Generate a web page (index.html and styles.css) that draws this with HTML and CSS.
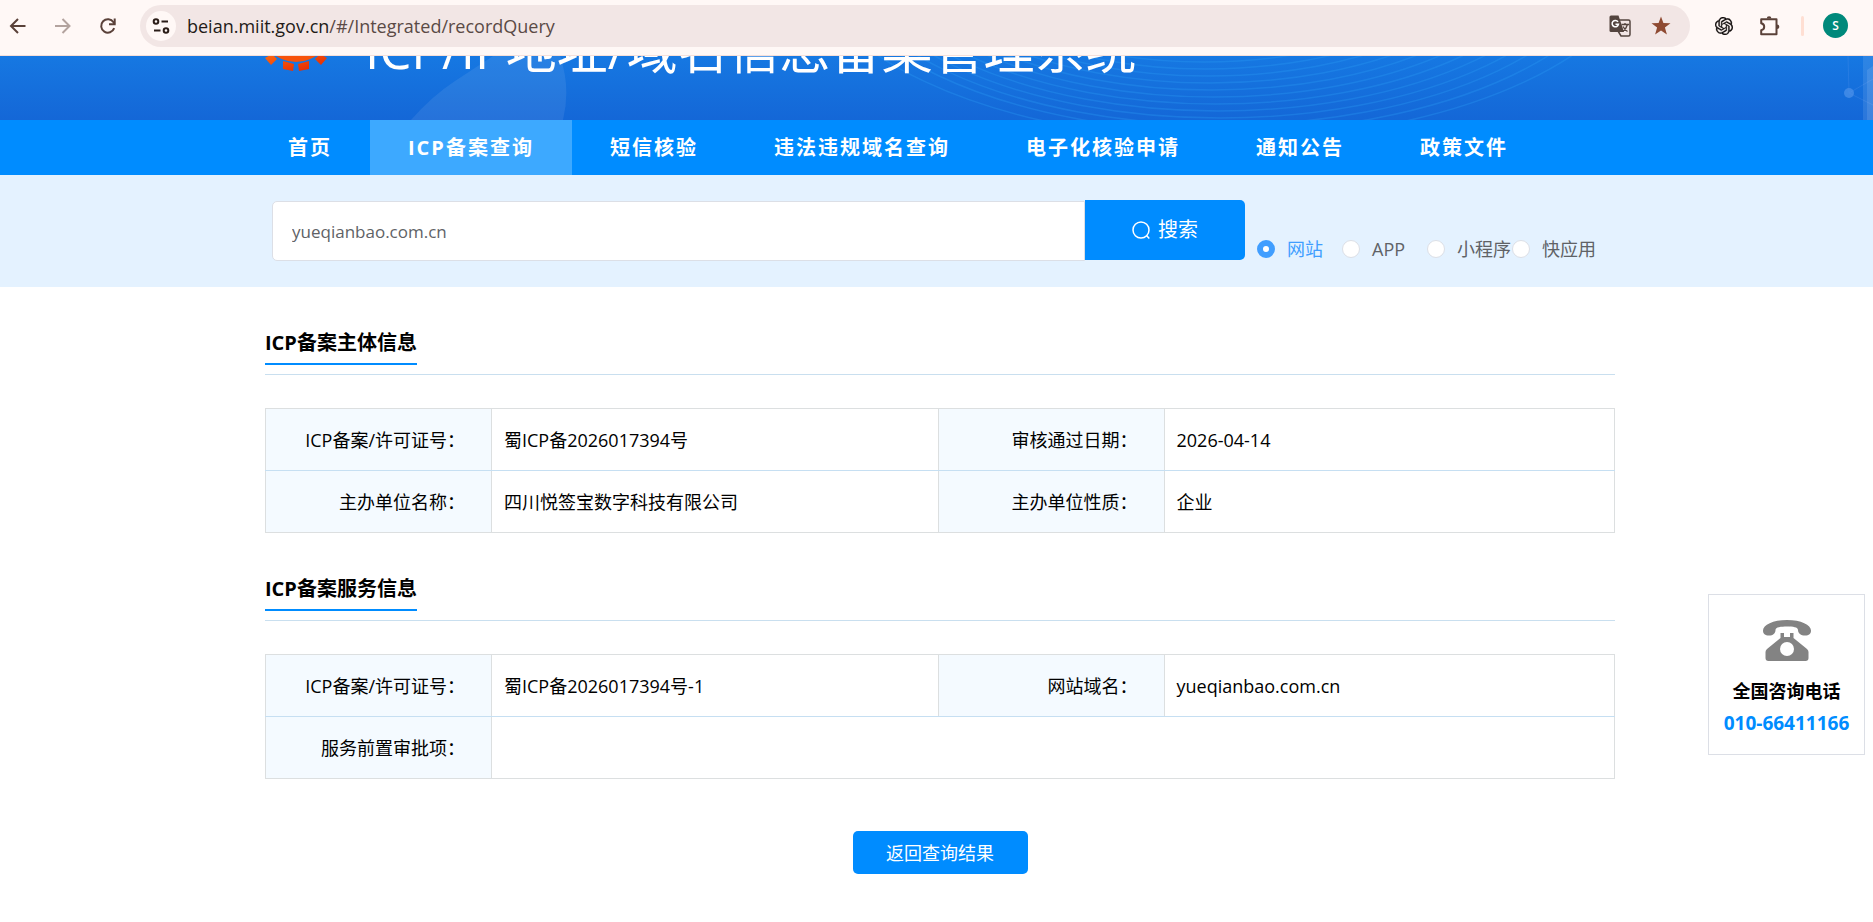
FILE: index.html
```html
<!DOCTYPE html>
<html lang="zh-CN">
<head>
<meta charset="utf-8">
<title>ICP/IP地址/域名信息备案管理系统</title>
<link rel="stylesheet" href="styles.css">
</head>
<body>
<div class="toolbar">
  <div class="nav-buttons">
    <button class="icon-btn" aria-label="后退"><svg width="20" height="20" viewBox="0 0 20 20"><path d="M17.500 10H3M10 3L3 10l7 7" fill="none" stroke="#5a4139" stroke-width="2"/></svg></button>
    <button class="icon-btn" aria-label="前进"><svg width="20" height="20" viewBox="0 0 20 20"><path d="M2 10h14.500M9.500 3l7 7-7 7" fill="none" stroke="#b3a39e" stroke-width="2"/></svg></button>
    <button class="icon-btn" aria-label="刷新"><svg width="20" height="20" viewBox="0 0 20 20"><path d="M16.200 12.200A6.700 6.700 0 1 1 15.500 6.300L16.600 7.800" fill="none" stroke="#5a4139" stroke-width="2"/><path d="M16.700 2.500v5.700H11" fill="none" stroke="#5a4139" stroke-width="2"/></svg></button>
  </div>
  <div class="omnibox">
    <button class="site-info" aria-label="网站信息"><svg width="18" height="18" viewBox="0 0 18 18" fill="none" stroke="#2b1d18" stroke-width="2"><circle cx="4" cy="4.500" r="2.300"/><path d="M9.500 4.500H16M2 13.500h6.500"/><circle cx="14" cy="13.500" r="2.300"/></svg></button>
    <div class="url"><span class="host">beian.miit.gov.cn</span><span>/#/Integrated/recordQuery</span></div>
    <button class="icon-btn" aria-label="翻译"><svg width="22" height="22" viewBox="0 0 22 22"><path d="M9 5h10.500q1.500 0 1.500 1.500v13q0 1.500-1.500 1.500H12l-3-5" fill="none" stroke="#54453f" stroke-width="1.500"/><path d="M2 .5h7.500L15 17H2Q.5 17 .5 15.500V2Q.5.5 2 .5z" fill="#54453f"/><path d="M9 6.800A3.200 3.200 0 1 0 9.500 9.200H6.500" fill="none" stroke="#fff" stroke-width="1.500"/><path d="M12.500 9.500H20M16 8v1.500M18.500 9.500q-1 4-5 7M14 11.500q1.500 3 4.500 5" fill="none" stroke="#54453f" stroke-width="1.300"/></svg></button>
    <button class="icon-btn" aria-label="书签"><svg width="22" height="22" viewBox="0 0 22 22"><path d="M11 1.500l2.400 6.600 7.100.2-5.600 4.300 2 6.900-5.900-4-5.900 4 2-6.900L1.500 8.300l7.100-.2z" fill="#8f4a32"/></svg></button>
  </div>
  <div class="extensions">
    <button class="icon-btn" aria-label="ChatGPT"><svg width="18" height="18" viewBox="0 0 24 24"><path fill="#120d0c" stroke="#120d0c" stroke-width=".4" d="M22.2819 9.8211a5.9847 5.9847 0 0 0-.5157-4.9108 6.0462 6.0462 0 0 0-6.5098-2.9A6.0651 6.0651 0 0 0 4.9807 4.1818a5.9847 5.9847 0 0 0-3.9977 2.9 6.0462 6.0462 0 0 0 .7427 7.0966 5.98 5.98 0 0 0 .511 4.9107 6.051 6.051 0 0 0 6.5146 2.9001A5.9847 5.9847 0 0 0 13.2599 24a6.0557 6.0557 0 0 0 5.7718-4.2058 5.9894 5.9894 0 0 0 3.9977-2.9001 6.0557 6.0557 0 0 0-.7475-7.0729zm-9.022 12.6081a4.4755 4.4755 0 0 1-2.8764-1.0408l.1419-.0804 4.7783-2.7582a.7948.7948 0 0 0 .3927-.6813v-6.7369l2.02 1.1686a.071.071 0 0 1 .038.052v5.5826a4.504 4.504 0 0 1-4.4945 4.4944zm-9.6607-4.1254a4.4708 4.4708 0 0 1-.5346-3.0137l.142.0852 4.783 2.7582a.7712.7712 0 0 0 .7806 0l5.8428-3.3685v2.3324a.0804.0804 0 0 1-.0332.0615L9.74 19.9502a4.4992 4.4992 0 0 1-6.1408-1.6464zM2.3408 7.8956a4.485 4.485 0 0 1 2.3655-1.9728V11.6a.7664.7664 0 0 0 .3879.6765l5.8144 3.3543-2.0201 1.1685a.0757.0757 0 0 1-.071 0l-4.8303-2.7865A4.504 4.504 0 0 1 2.3408 7.872zm16.5963 3.8558L13.1038 8.364 15.1192 7.2a.0757.0757 0 0 1 .071 0l4.8303 2.7913a4.4944 4.4944 0 0 1-.6765 8.1042v-5.6772a.79.79 0 0 0-.407-.667zm2.0107-3.0231l-.142-.0852-4.7735-2.7818a.7759.7759 0 0 0-.7854 0L9.409 9.2297V6.8974a.0662.0662 0 0 1 .0284-.0615l4.8303-2.7866a4.4992 4.4992 0 0 1 6.6802 4.66zM8.3065 12.863l-2.02-1.1638a.0804.0804 0 0 1-.038-.0567V6.0742a4.4992 4.4992 0 0 1 7.3757-3.4537l-.142.0805L8.704 5.459a.7948.7948 0 0 0-.3927.6813zm1.0976-2.3654l2.602-1.4998 2.6069 1.4998v2.9994l-2.5974 1.4997-2.6067-1.4997Z"/></svg></button>
    <button class="icon-btn" aria-label="扩展程序"><svg width="22" height="22" viewBox="0 0 22 22"><path d="M3.200 4.200H17.500V19.300H2.200V15.200Q5.200 14.500 5.200 11.700T2.200 8.200V4.200z" fill="none" stroke="#5a4139" stroke-width="2" stroke-linejoin="round"/><path d="M7.800 3.500a2.300 2.300 0 0 1 4.600 0zM18 9.500a2.300 2.300 0 0 1 0 4.600z" fill="#5a4139"/></svg></button>
    <span class="divider"></span>
    <button class="avatar" aria-label="个人资料">S</button>
  </div>
</div>

<header class="banner">
  <svg class="banner-art" viewBox="0 0 1873 64" preserveAspectRatio="xMidYMin slice" aria-hidden="true">
    <path d="M411 64Q432 40 455 25Q478 10 493 0H560Q571 32 563 64z" fill="#fff" opacity=".08"/>
    <g fill="none" stroke="#2b9df5" stroke-width="1.500" opacity=".32">
      <ellipse cx="1225" cy="-116" rx="425" ry="200"/>
      <ellipse cx="1225" cy="-116" rx="405" ry="192"/>
      <ellipse cx="1222" cy="-116" rx="390" ry="185"/>
      <ellipse cx="1220" cy="-116" rx="376" ry="178"/>
      <ellipse cx="1218" cy="-116" rx="362" ry="171"/>
      <ellipse cx="1216" cy="-116" rx="348" ry="164"/>
      <ellipse cx="1214" cy="-116" rx="334" ry="157"/>
      <ellipse cx="1212" cy="-116" rx="320" ry="150"/>
      <ellipse cx="1210" cy="-116" rx="306" ry="143"/>
      <ellipse cx="1208" cy="-116" rx="292" ry="136"/>
      <ellipse cx="1206" cy="-116" rx="278" ry="129"/>
      <ellipse cx="1204" cy="-116" rx="264" ry="122"/>
    </g>
    <circle cx="1849" cy="37" r="5" fill="#4f93ea" opacity=".7"/>
    <path d="M1848 0l1 37 24-14M1849 37l24 12" fill="none" stroke="#4f93ea" opacity=".3"/>
    <path d="M1863 0h10v64h-10z" fill="#fff" opacity=".1"/>
    <path d="M1867 14l6-4v54h-6z" fill="#fff" opacity=".1"/>
  </svg>
  <div class="container banner-inner">
    <svg class="emblem" width="62" height="62" viewBox="0 0 62 62" aria-hidden="true">
      <defs><linearGradient id="flame" x1="0" y1="0" x2="1" y2="1"><stop offset="0" stop-color="#ff6a10"/><stop offset="1" stop-color="#e02000"/></linearGradient></defs>
      <circle cx="31" cy="16" r="36" fill="#f7520a"/>
      <path d="M0 48l6 7 6-6-5-5zM18 51l11 3-1 7-10-2zM44 51l-11 3 1 7 10-2zM62 48l-6 7-6-6 5-5z" fill="url(#flame)"/>
    </svg>
    <h1 class="title">ICP/IP地址/域名信息备案管理系统</h1>
  </div>
</header>

<nav class="main-nav">
  <ul class="nav-list">
    <li><a href="#">首页</a></li>
    <li><a href="#" class="active">ICP备案查询</a></li>
    <li><a href="#">短信核验</a></li>
    <li><a href="#">违法违规域名查询</a></li>
    <li><a href="#">电子化核验申请</a></li>
    <li><a href="#">通知公告</a></li>
    <li><a href="#">政策文件</a></li>
  </ul>
</nav>

<section class="search-band">
  <form class="container search-form">
    <input class="search-input" type="text" value="yueqianbao.com.cn" aria-label="搜索内容">
    <button class="search-btn" type="button"><svg width="18" height="20" viewBox="0 0 18 20" fill="none" stroke="#fff" stroke-width="1.500"><circle cx="9" cy="10" r="8"/><path d="M14.500 15.500l2.800 3"/></svg>搜索</button>
    <div class="radios">
      <label class="radio"><input type="radio" name="kind" checked><span>网站</span></label>
      <label class="radio"><input type="radio" name="kind"><span>APP</span></label>
      <label class="radio"><input type="radio" name="kind"><span>小程序</span></label>
      <label class="radio"><input type="radio" name="kind"><span>快应用</span></label>
    </div>
  </form>
</section>

<main class="container content">
  <section class="info">
    <div class="info-head"><h2>ICP备案主体信息</h2></div>
    <table class="info-table">
      <colgroup><col class="c-label"><col class="c-value"><col class="c-label"><col></colgroup>
      <tr><th>ICP备案/许可证号：</th><td>蜀ICP备2026017394号</td><th>审核通过日期：</th><td>2026-04-14</td></tr>
      <tr><th>主办单位名称：</th><td>四川悦签宝数字科技有限公司</td><th>主办单位性质：</th><td>企业</td></tr>
    </table>
  </section>
  <section class="info">
    <div class="info-head"><h2>ICP备案服务信息</h2></div>
    <table class="info-table">
      <colgroup><col class="c-label"><col class="c-value"><col class="c-label"><col></colgroup>
      <tr><th>ICP备案/许可证号：</th><td>蜀ICP备2026017394号-1</td><th>网站域名：</th><td>yueqianbao.com.cn</td></tr>
      <tr><th>服务前置审批项：</th><td colspan="3"></td></tr>
    </table>
  </section>
  <button class="back-btn" type="button">返回查询结果</button>
</main>

<aside class="hotline">
  <svg width="48" height="42" viewBox="0 0 48 42" aria-hidden="true"><path d="M24 0C10 0 0 5 0 10.500C0 14 2 15.500 6 15.500S12.500 13.500 12.500 10C12.500 7 18 6.500 24 6.500S35 7 35 10C35 13.500 38 15.500 42 15.500S48 14 48 10.500C48 5 38 0 24 0z" fill="#838383"/><path d="M17.500 13H21v4h6v-4h3.500v5L44 29q1.500 1.500 1.500 3v6q0 3-3 3h-37q-3 0-3-3v-6q0-1.500 1.500-3L17.500 18z" fill="#838383"/><circle cx="24" cy="29" r="7" fill="#fff"/></svg>
  <strong class="hotline-label">全国咨询电话</strong>
  <strong class="hotline-number">010-66411166</strong>
</aside>
</body>
</html>
```
FILE: styles.css
```css
* { box-sizing: border-box; }

body {
  margin: 0;
  background: #fff;
  color: #000;
  font-family: "Open Sans", "Noto Sans CJK SC", sans-serif;
  font-size: 18px;
  line-height: 24px;
}

button, input { font: inherit; }
button { border: 0; padding: 0; cursor: pointer; }
svg { display: block; flex: none; }

.container {
  width: 100%;
  max-width: 1357px;
  margin: 0 auto;
  padding-left: 7px;
}

/* Browser toolbar */
.toolbar {
  position: relative;
  z-index: 1;
  display: flex;
  align-items: center;
  height: 56px;
  padding: 0 25px 4px 8px;
  background: #fff8f6;
  border-bottom: 1px solid #f5dfda;
}
.nav-buttons { display: flex; gap: 25px; margin-right: 22px; }
.icon-btn { background: none; }
.omnibox {
  flex: 1;
  display: flex;
  align-items: center;
  gap: 19px;
  height: 42px;
  padding: 0 18px 0 6px;
  border-radius: 21px;
  background: #f2e6e5;
}
.site-info {
  display: grid;
  place-items: center;
  width: 30px;
  height: 30px;
  border-radius: 50%;
  background: #fff8f6;
}
.url {
  flex: 1;
  display: flex;
  margin-left: -8px;
  color: #5a4a45;
}
.host { color: #221a17; }
.extensions { display: flex; align-items: center; gap: 26px; margin-left: 25px; }
.divider { width: 3px; height: 20px; margin-left: -6px; border-radius: 2px; background: #ffdfd3; }
.avatar {
  width: 25px;
  height: 25px;
  margin-left: -7px;
  border-radius: 50%;
  background: #00897b;
  color: #fff;
  font-size: 12px;
  font-weight: 600;
  line-height: 25px;
}

/* Banner, scrolled partly under the toolbar */
.banner {
  position: relative;
  height: 64px;
  overflow: hidden;
  background: linear-gradient(#1678e2, #1467d7);
}
.banner-art { position: absolute; inset: 0; width: 100%; height: 100%; }
.banner-inner {
  position: relative;
  display: flex;
  align-items: flex-end;
  gap: 38px;
  height: 64px;
  padding-bottom: 36px;
}
.emblem { margin-bottom: 12px; }
.title {
  margin: 0;
  color: #fff;
  font-size: 51px;
  font-weight: 400;
  line-height: 70px;
  white-space: nowrap;
}

/* Navigation */
.main-nav { background: #008cff; }
.nav-list {
  display: flex;
  max-width: 1373px;
  margin: 0 auto;
  padding: 0;
  list-style: none;
}
.nav-list a {
  display: block;
  padding: 0 38px;
  color: #fff;
  font-size: 20px;
  font-weight: 700;
  letter-spacing: 2px;
  line-height: 55px;
  text-decoration: none;
  white-space: nowrap;
}
.nav-list .active { background: #3da9ff; }

/* Search */
.search-band { padding: 25px 0 26px; background: #e4f2ff; }
.search-form { display: flex; align-items: flex-start; padding-left: 14px; }
.search-input {
  flex: 1;
  min-width: 0;
  height: 60px;
  margin-top: 1px;
  padding: 0 19px;
  border: 1px solid #dcdfe6;
  border-radius: 5px 0 0 5px;
  background: #fff;
  color: #606266;
  font-size: 17px;
}
.search-btn {
  display: flex;
  align-items: center;
  justify-content: center;
  gap: 8px;
  width: 160px;
  height: 60px;
  border-radius: 0 5px 5px 0;
  background: #008cff;
  color: #fff;
  font-size: 20px;
}
.radios { display: grid; grid-template-columns: repeat(4, 85px); margin: 37px 0 0 12px; width: 358px; }
.radio { display: flex; align-items: center; gap: 12px; color: #606266; white-space: nowrap; }
.radio input {
  flex: none;
  appearance: none;
  width: 18px;
  height: 18px;
  margin: 0;
  border: 1px solid #dcdfe6;
  border-radius: 50%;
  background: #fff;
}
.radio input:checked { border: 6px solid #409eff; }
.radio input:checked + span { color: #409eff; }

/* Record tables */
.content { padding-top: 42px; }
.info { margin-bottom: 42px; }
.info-head { margin-bottom: 33px; padding-bottom: 9px; border-bottom: 1px solid #c9dfef; }
.info h2 {
  width: max-content;
  margin: 0;
  padding-bottom: 6px;
  border-bottom: 2px solid #008cff;
  font-size: 20px;
  line-height: 28px;
}
.info-table { width: 100%; border-collapse: collapse; table-layout: fixed; }
.c-label { width: 226px; }
.c-value { width: 33.1%; }
.info-table th, .info-table td {
  height: 62px;
  padding: 0 12px;
  border: 1px solid #dcdfe0;
  font-weight: 400;
  text-align: left;
}
.info-table th { padding-right: 26px; background: #f4faff; text-align: right; }
.info-table tr:first-child > * { border-bottom-color: #c6dff2; }
.back-btn {
  display: block;
  width: 175px;
  height: 43px;
  margin: 52px auto 0;
  border-radius: 5px;
  background: #008cff;
  color: #fff;
}

/* Floating hotline card */
.hotline {
  position: fixed;
  top: 594px;
  right: 8px;
  display: flex;
  flex-direction: column;
  align-items: center;
  width: 157px;
  padding: 25px 0 17px;
  border: 1px solid #dcdfe6;
  background: #fff;
}
.hotline-label { margin-top: 17px; }
.hotline-number { margin-top: 6px; color: #008cff; font-size: 19px; line-height: 28px; }
```
